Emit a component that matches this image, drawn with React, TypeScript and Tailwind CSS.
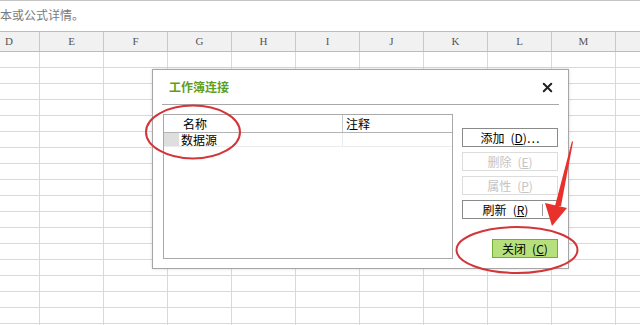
import { X } from 'lucide-react';

const cols = ['D', 'E', 'F', 'G', 'H', 'I', 'J', 'K', 'L', 'M'];
const rows = Array.from({ length: 18 }, (_, i) => i);

const cjk = { fontFamily: '"Noto Sans CJK SC", "Liberation Sans", sans-serif' };

type BtnProps = { label: string; hot: string; tail?: string; disabled?: boolean };

const SideButton = ({ label, hot, tail, disabled }: Readonly<BtnProps>) => (
  <div
    className={`flex h-[19px] w-[96px] items-center justify-center gap-[6px] border text-[12px] leading-none ${
      disabled ? 'border-[#dcdcdc] text-[#c4c4c4]' : 'border-[#8a8a8a] text-black'
    }`}
  >
    <span>{label}</span>
    <span>
      (<span className="underline">{hot}</span>){tail}
    </span>
  </div>
);

export default function App() {
  return (
    <div className="relative h-[325px] w-[640px] overflow-hidden bg-white" style={cjk}>
      {/* formula bar hint */}
      <div className="flex h-[31px] items-center border-t border-[#c4c4c4] pb-[3px] text-[12px] text-[#7a7a7a]">
        本或公式详情。
      </div>

      {/* column headers */}
      <div className="flex h-[21px] border-y border-[#bcbcbc] bg-[#f1f1f1] text-[11px] text-[#555]">
        {cols.map((c, i) => (
          <div
            key={c}
            className={`flex shrink-0 items-center border-r border-[#c8c8c8] ${
              i === 0 ? 'w-[40px] pl-[5px]' : 'w-[64px] justify-center'
            }`}
            style={{ fontFamily: '"Liberation Serif", serif' }}
          >
            {c}
          </div>
        ))}
        <div className="flex-1" />
      </div>

      {/* grid */}
      {rows.map((r) => (
        <div key={r} className="flex h-[16px] border-b border-[#d9d9d9]">
          {cols.map((c, i) => (
            <div
              key={c}
              className={`shrink-0 border-r border-[#d9d9d9] ${i === 0 ? 'w-[40px]' : 'w-[64px]'}`}
            />
          ))}
        </div>
      ))}

      {/* dialog */}
      <div className="absolute left-[152px] top-[69px] flex h-[200px] w-[417px] flex-col border border-[#a6a6a6] bg-white px-[9px] shadow-[0_0_3px_rgba(0,0,0,0.15)]">
        <div className="flex h-[34px] items-center justify-between pl-[7px] pr-[4px]">
          <span className="text-[12px] font-bold text-[#5f9e22]">工作簿连接</span>
          <X size={15} strokeWidth={3.2} className="text-[#222]" />
        </div>
        <div className="border-t border-[#a8a8a8]" />

        <div className="mt-[9px] flex gap-[9px] pl-[1px]">
          {/* list */}
          <div className="flex h-[145px] w-[290px] flex-col border border-[#a8a8a8] text-[12px] text-black">
            <div className="flex h-[18px] border-b border-[#b4b4b4]">
              <div className="flex w-[179px] items-center border-r border-[#c8c8c8] pl-[19px]">名称</div>
              <div className="flex items-center pl-[3px]">注释</div>
            </div>
            <div className="flex h-[14px] border-b border-[#ececec]">
              <div className="w-[15px] bg-[#dedede]" />
              <div className="flex w-[164px] items-center border-r border-[#ececec] pl-[2px] leading-none">
                数据源
              </div>
            </div>
          </div>

          {/* buttons */}
          <div className="mt-[14px] flex flex-col gap-[5px]">
            <SideButton label="添加" hot="D" tail="…" />
            <SideButton label="删除" hot="E" disabled />
            <SideButton label="属性" hot="P" disabled />
            <div className="flex h-[19px] w-[96px] items-center border border-[#8a8a8a] text-[12px] leading-none text-black">
              <div className="flex flex-1 items-center justify-center gap-[6px] pl-[6px]">
                <span>刷新</span>
                <span>
                  (<span className="underline">R</span>)
                </span>
              </div>
              <div className="h-[12px] border-l border-[#9a9a9a]" />
              <svg width="14" height="10" viewBox="0 0 14 10">
                <path d="M4 3 L10 3 L7 7 Z" fill="#333" />
              </svg>
            </div>
            <div className="mt-[15px] flex justify-end">
              <div className="flex h-[19px] w-[66px] items-center justify-center gap-[6px] border border-[#74ad33] bg-[#b5e07c] text-[12px] leading-none text-black">
                <span>关闭</span>
                <span>
                  (<span className="underline">C</span>)
                </span>
              </div>
            </div>
          </div>
        </div>
      </div>

      {/* red annotations */}
      <svg className="pointer-events-none absolute left-0 top-0" width="640" height="325" viewBox="0 0 640 325">
        <ellipse cx="193" cy="132" rx="47" ry="26.5" fill="none" stroke="#d2363a" strokeWidth="2" />
        <ellipse cx="517" cy="250" rx="60.5" ry="23" fill="none" stroke="#d2363a" strokeWidth="2" />
        <polygon points="572,141 573,142 561,206 555,206" fill="#e8302c" />
        <polygon points="545,203 567,208 552,226" fill="#e8302c" />
      </svg>
    </div>
  );
}
